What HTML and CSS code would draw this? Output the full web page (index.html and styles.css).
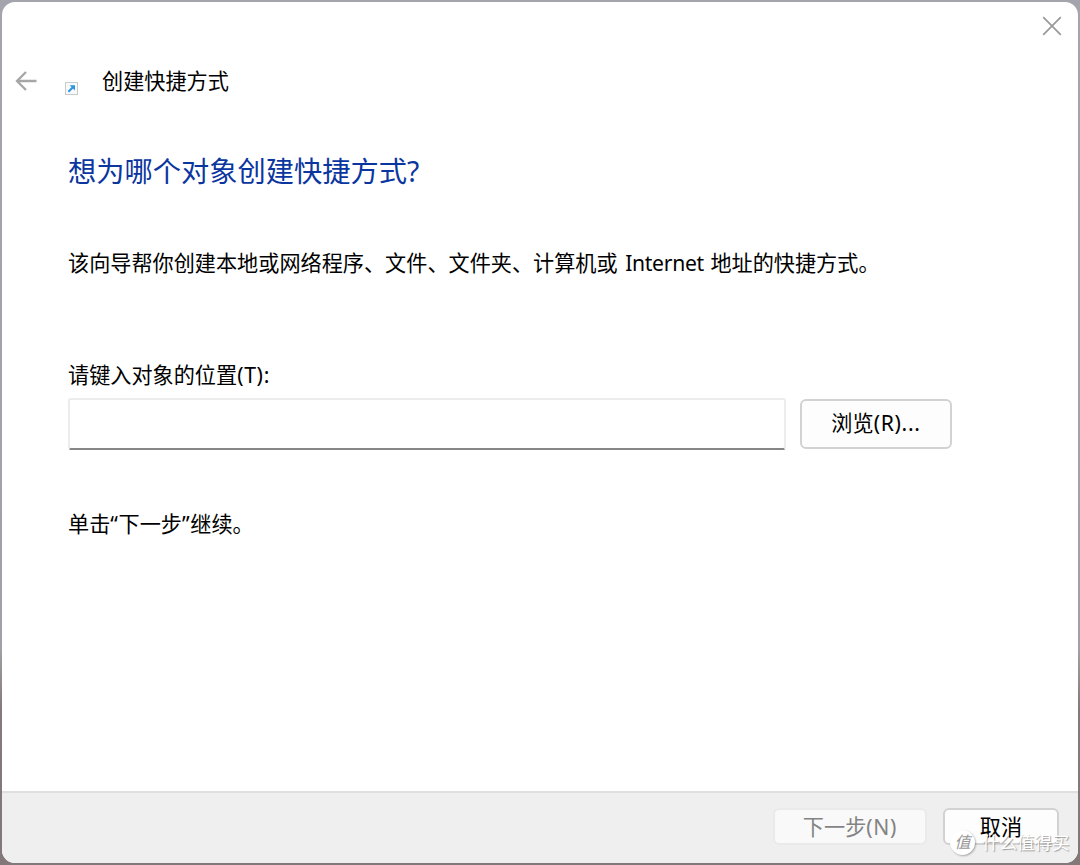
FILE: index.html
```
<!DOCTYPE html>
<html lang="zh-CN">
<head>
    <meta charset="UTF-8">
    <meta name="viewport" content="width=device-width, initial-scale=1.0">
    <title>创建快捷方式</title>
    <link rel="stylesheet" href="styles.css">
</head>
<body>
    <div class="dialog">
        <div class="titlebar">
            <svg class="close-icon" width="20" height="20" viewBox="0 0 20 20">
                <path d="M1.2 1.2L18.8 18.8M18.8 1.2L1.2 18.8"/>
            </svg>
        </div>

        <div class="header">
            <svg class="back-icon" width="22" height="20" viewBox="0 0 22 20">
                <path d="M21.5 10H2M11 1L2 10L11 19"/>
            </svg>
            <svg class="shortcut-icon" width="13" height="13" viewBox="0 0 13 13">
                <rect class="frame" x="0.5" y="0.5" width="12" height="12"/>
                <path class="arrow" d="M3.4 9.8L8.4 4.8"/>
                <path class="arrow-head" d="M4.6 3.2H10V8.6Z"/>
            </svg>
            <span class="header-title">创建快捷方式</span>
        </div>

        <div class="content">
            <h1 class="heading">想为哪个对象创建快捷方式?</h1>
            <p class="description">该向导帮你创建本地或网络程序、文件、文件夹、计算机或 <span class="latin">Internet</span> 地址的快捷方式。</p>
            <label class="field-label" for="location">请键入对象的位置<span class="key">(T):</span></label>
            <div class="field-row">
                <input id="location" class="field" type="text">
                <button class="btn btn-browse">浏览<span class="key">(R)...</span></button>
            </div>
            <p class="hint">单击<span class="key">“</span>下一步<span class="key">”</span>继续。</p>
        </div>

        <div class="footer">
            <button class="btn btn-next" disabled>下一步<span class="key">(N)</span></button>
            <button class="btn btn-cancel">取消</button>
        </div>
    </div>

    <div class="watermark">
        <span class="watermark-logo">值</span>
        <span class="watermark-text">什么值得买</span>
    </div>
</body>
</html>
```
FILE: styles.css
```
* {
    box-sizing: border-box;
}
body {
    margin: 0;
    height: 865px;
    padding: 2px;
    overflow: hidden;
    background: linear-gradient(#a4a5ac 0%, #a0a0a6 75%, #85797b 82%, #827779 100%);
    font-family: "Noto Sans", "Noto Sans CJK SC", sans-serif;
    font-size: 21.15px;
    color: #000;
}
.dialog {
    display: flex;
    flex-direction: column;
    height: 861px;
    background-color: #fff;
    border-radius: 13px;
    overflow: hidden;
}
.titlebar {
    display: flex;
    justify-content: flex-end;
    height: 59px;
    padding: 14px 16px 0 0;
}
.close-icon,
.back-icon {
    fill: none;
    stroke: #999;
    stroke-width: 1.7;
}
.back-icon {
    stroke: #a6a6a6;
    stroke-width: 2.3;
}
.header {
    display: flex;
    align-items: center;
    height: 40px;
    padding-left: 13px;
}
.shortcut-icon {
    margin: 15px 0 0 28px;
}
.frame {
    fill: #f8f9fa;
    stroke: #c8cacc;
}
.arrow {
    stroke: #2b95e2;
    stroke-width: 2;
}
.arrow-head {
    fill: #2b95e2;
}
.header-title {
    margin-left: 24px;
    line-height: 32px;
}
.content {
    flex: 1;
    padding: 50px 66px 0;
}
.heading {
    margin: 0;
    font-size: 28.25px;
    font-weight: normal;
    line-height: 40px;
    color: #0b36a0;
}
.description {
    margin: 56px 0 0;
    line-height: 32px;
    white-space: nowrap;
}
.latin {
    margin: 0 1px 0 2px;
    letter-spacing: -0.3px;
}
.key {
    letter-spacing: 0.7px;
}
.field-label {
    display: block;
    margin-top: 80px;
    line-height: 32px;
}
.field-row {
    display: flex;
    align-items: center;
    gap: 14px;
    margin-top: 7px;
}
.field {
    width: 718px;
    height: 52px;
    border: 2px solid #ececec;
    border-bottom: 2px solid #868686;
    border-radius: 3px;
    outline: none;
    background-color: #fff;
}
.btn {
    padding: 0;
    border: 2px solid #d2d2d2;
    border-radius: 6px;
    background-color: #fdfdfd;
    font-family: inherit;
    font-size: inherit;
    line-height: 30px;
    color: #000;
}
.btn-browse {
    width: 152px;
    height: 50px;
    padding-bottom: 2px;
}
.hint {
    margin: 58px 0 0;
    line-height: 32px;
}
.footer {
    display: flex;
    justify-content: flex-end;
    align-items: flex-start;
    gap: 16px;
    height: 72px;
    padding: 15px 19px 0 0;
    border-top: 2px solid #dfdfdf;
    background-color: #efefef;
}
.btn-next {
    width: 154px;
    height: 37px;
    border-color: #eaeaea;
    background-color: #f9f9f9;
    color: #838383;
}
.btn-cancel {
    width: 116px;
    height: 37px;
}
.watermark {
    position: absolute;
    left: 950px;
    top: 829px;
    display: flex;
    align-items: center;
    gap: 7px;
    height: 26px;
}
.watermark-logo {
    width: 25px;
    height: 25px;
    border-radius: 50%;
    background-color: #fff;
    box-shadow: 1px 1px 2px rgba(0,0,0,0.3);
    font-size: 16px;
    font-style: italic;
    line-height: 24px;
    text-align: center;
    color: #999;
}
.watermark-text {
    font-size: 17.5px;
    line-height: 26px;
    white-space: nowrap;
    color: #fff;
    text-shadow: 1px 1px 1px rgba(0,0,0,0.35);
}
```
